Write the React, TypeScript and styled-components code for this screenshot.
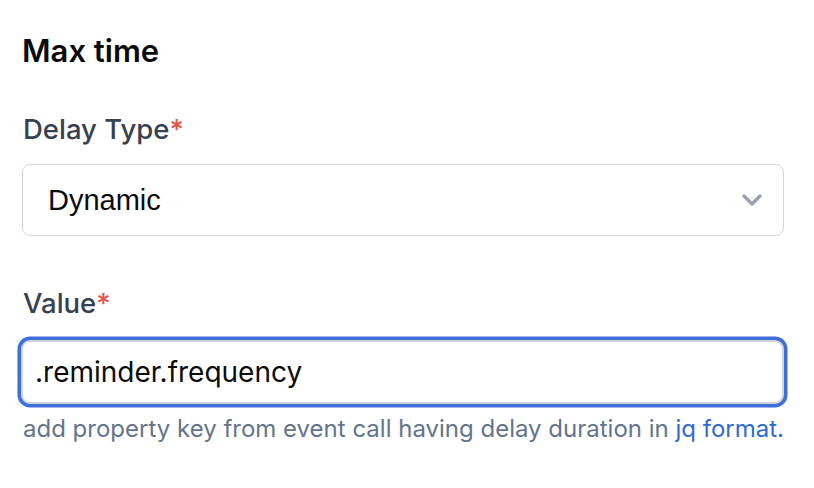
import React from "react";
import styled, { createGlobalStyle } from "styled-components";

const GlobalStyle = createGlobalStyle`
  body {
    margin: 0;
    background: #ffffff;
    font-family: Inter, "Noto Sans", sans-serif;
  }
`;

const Panel = styled.div`
  width: 814px;
  height: 488px;
  box-sizing: border-box;
  padding: 32px 30px 0 22px;
`;

const Title = styled.h2`
  margin: 0;
  font-size: 31px;
  line-height: 38px;
  font-weight: 600;
  color: #0b0b0c;
`;

const Field = styled.div<{ $top: number }>`
  margin-top: ${(p) => p.$top}px;
  display: flex;
  flex-direction: column;
`;

const Label = styled.label`
  font-size: 27.5px;
  line-height: 34px;
  font-weight: 500;
  color: #374151;
  margin-left: 1px;
  margin-bottom: 18px;
`;

const Required = styled.span`
  color: #e5534b;
`;

const SelectBox = styled.div`
  height: 72px;
  box-sizing: border-box;
  border: 1.5px solid #d4d7dc;
  border-radius: 8px;
  display: flex;
  align-items: center;
  justify-content: space-between;
  padding: 0 20px 0 25px;
  width: 762px;
`;

const SelectValue = styled.span`
  font-family: "Liberation Sans", Arial, sans-serif;
  font-size: 29px;
  color: #0b0b0c;
`;

const TextInput = styled.input`
  margin: 2px 0 0 -1px;
  width: 763px;
  height: 64px;
  box-sizing: border-box;
  border: 2px solid #d1d4d9;
  border-radius: 9px;
  box-shadow: 0 0 0 3.5px #3f6fdb;
  outline: none;
  padding: 0 12px;
  font-family: Inter, "Noto Sans", sans-serif;
  font-size: 28px;
  color: #0b0b0c;
  background: #ffffff;
`;

const Hint = styled.p`
  margin: 10px 0 0 1px;
  font-size: 24px;
  line-height: 30px;
  color: #64748b;
  white-space: nowrap;
`;

const Link = styled.a`
  color: #2f6bd3;
  text-decoration: none;
`;

const Chevron = () => (
  <svg width="22" height="14" viewBox="0 0 22 14" fill="none">
    <path
      d="M3 3l8 8 8-8"
      stroke="#9aa0ab"
      strokeWidth="3.2"
      strokeLinecap="round"
      strokeLinejoin="round"
    />
  </svg>
);

const App = () => (
  <>
    <GlobalStyle />
    <Panel>
      <Title>Max time</Title>
      <Field $top={42}>
        <Label>
          Delay Type<Required>*</Required>
        </Label>
        <SelectBox>
          <SelectValue>Dynamic</SelectValue>
          <Chevron />
        </SelectBox>
      </Field>
      <Field $top={50}>
        <Label>
          Value<Required>*</Required>
        </Label>
        <TextInput defaultValue=".reminder.frequency" />
        <Hint>
          add property key from event call having delay duration in{" "}
          <Link href="#">jq format.</Link>
        </Hint>
      </Field>
    </Panel>
  </>
);

export default App;
